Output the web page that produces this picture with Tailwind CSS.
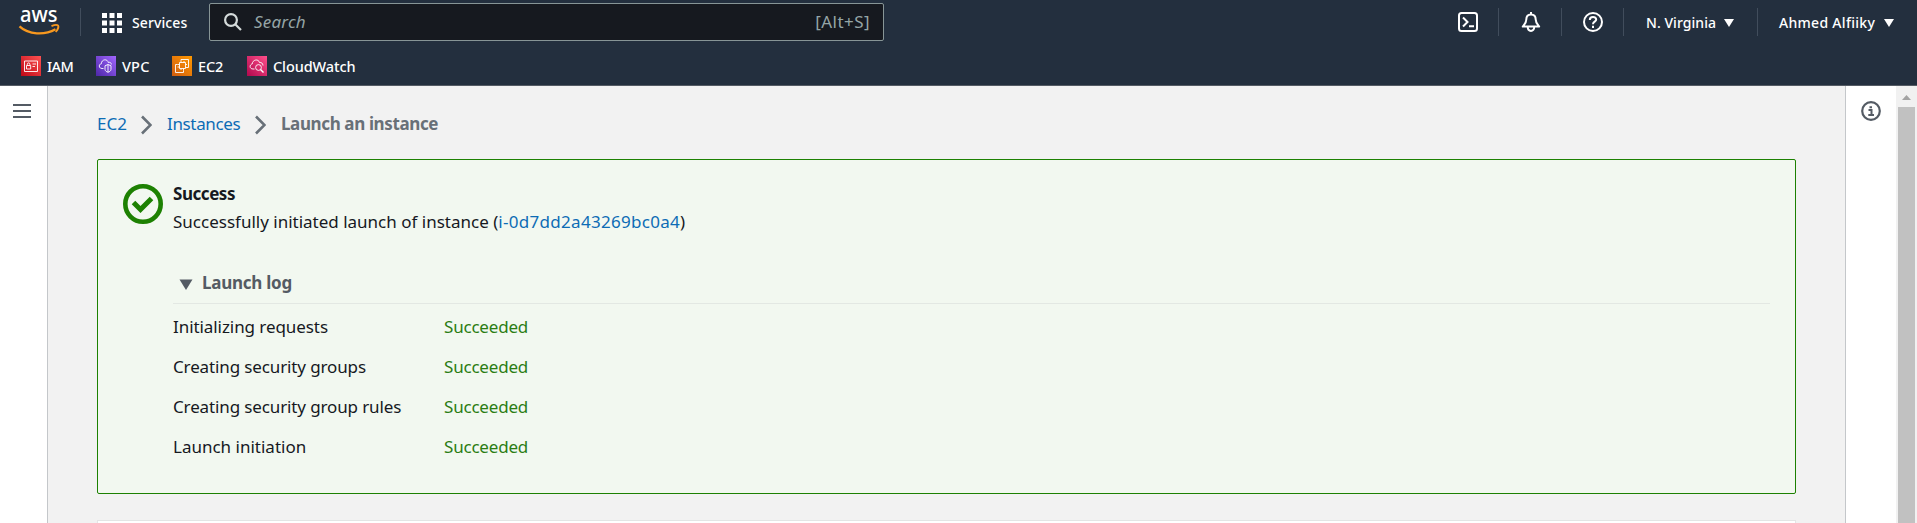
<!DOCTYPE html>
<html lang="en">
<head>
<meta charset="utf-8">
<title>Launch an instance</title>
<script src="https://cdn.jsdelivr.net/npm/@tailwindcss/browser@4"></script>
</head>
<body class="flex h-[523px] w-[1917px] flex-col overflow-hidden bg-[#f2f3f3] font-['Noto_Sans','Open_Sans',sans-serif] text-[17px] leading-7 whitespace-nowrap text-[#16191f]">
<header class="h-[86px] shrink-0 border-b border-[#545b64] bg-[#232f3e] text-sm font-medium text-white">
  <div class="flex h-[45px] items-start">
    <div class="w-20 pt-[6px] pl-[19px]">
      <svg class="block h-[30px] w-[41px] overflow-visible" viewBox="0 0 41 30">
        <text x="1" y="16" textLength="37.5" lengthAdjust="spacingAndGlyphs" font-family="Noto Sans" font-size="21" font-weight="500" fill="#fff">aws</text>
        <path d="M.5 20.4C9.5 28.8 25.500 29.500 36.500 23.200" fill="none" stroke="#f7981f" stroke-width="2.300"/>
        <path d="M32.500 20.200c3-1.300 6-1.300 6.700-.5.5 1-.4 4-2.500 6.300" fill="none" stroke="#f7981f" stroke-width="1.800"/>
      </svg>
    </div>
    <div class="mt-2 h-7 w-px bg-[#414d5c]"></div>
    <div class="flex w-32 items-center pt-3 pl-[21px]">
      <svg class="size-5" viewBox="0 0 20 20" fill="#fff"><path d="M0 0h5v5H0zM7.500 0h5v5h-5zM15 0h5v5h-5zM0 7.500h5v5H0zM7.500 7.500h5v5h-5zM15 7.500h5v5h-5zM0 15h5v5H0zM7.500 15h5v5h-5zM15 15h5v5h-5z"/></svg>
      <span class="ml-[10px] leading-[22px] tracking-[.1px]">Services</span>
    </div>
    <div class="mt-[3px] flex h-[38px] w-[675px] items-center rounded-xs border border-[#879596] bg-[#16191f] pr-[13px] pl-3.5 text-[17px] font-normal text-[#95a5a6]">
      <svg class="size-[18px]" viewBox="0 0 18 18" fill="none" stroke="#d5dbdb" stroke-width="2.200"><circle cx="7" cy="7" r="5.900"/><path d="m11 11 6 6"/></svg>
      <span class="ml-[12px] tracking-[.2px] italic">Search</span>
      <span class="ml-auto tracking-[.45px]">[Alt+S]</span>
    </div>
    <div class="ml-auto flex h-full items-start">
      <svg class="mt-3 mr-5 size-5" viewBox="0 0 20 20" fill="none" stroke="#fff" stroke-width="2"><rect x="1" y="1" width="18" height="18" rx="2.500"/><path d="m5 5.500 4.500 4.500L5 14.500M11 14.200h5"/></svg>
      <div class="mt-2 h-7 w-px bg-[#414d5c]"></div>
      <svg class="mr-[20px] ml-[22px] mt-3 h-5 w-[20px]" viewBox="0 0 20 20" fill="none" stroke="#fff" stroke-width="2"><path d="M10 0v2.500M10 2.500C6.500 2.500 5.300 5 5.300 7.500c0 3.500-2 5.200-3.500 7.100h16.400c-1.500-1.900-3.500-3.600-3.500-7.100 0-2.500-1.200-5-4.700-5ZM6.700 14.600c0 5.700 6.600 5.700 6.600 0" stroke-linejoin="round"/></svg>
      <div class="mt-2 h-7 w-px bg-[#414d5c]"></div>
      <svg class="mr-5 ml-[21px] mt-3 size-5" viewBox="0 0 20 20" fill="none" stroke="#fff" stroke-width="2"><circle cx="10" cy="10" r="9"/><path d="M6.800 8c0-4 6.400-4 6.400-.4C13.200 9.800 10 9.600 10 12.200M10 13.700v2.200"/></svg>
      <div class="mt-2 h-7 w-px bg-[#414d5c]"></div>
      <div class="flex w-[133px] items-center pt-3 pl-[22px] leading-[22px]"><span class="w-[78px] tracking-[.05px]">N. Virginia</span><svg class="h-2 w-[10px]" viewBox="0 0 10 8"><path d="M0 0h10L5 8z" fill="#fff"/></svg></div>
      <div class="mt-2 h-7 w-px bg-[#414d5c]"></div>
      <div class="flex w-[159px] items-center pt-3 pl-[21px] leading-[22px]"><span class="w-[105px] tracking-[.3px]">Ahmed Alfiiky</span><svg class="h-2 w-[10px]" viewBox="0 0 10 8"><path d="M0 0h10L5 8z" fill="#fff"/></svg></div>
    </div>
  </div>
  <nav class="flex h-[40px] items-center pt-[1px] pl-[21px] text-[14.500px] leading-5">
    <a class="flex w-[75px] items-center gap-[6px]">
      <svg class="size-5" viewBox="0 0 20 20" fill="none" stroke="#fff" stroke-width=".9"><defs><linearGradient id="r" x1="0" y1="1" x2="1" y2="0"><stop stop-color="#bd0816"/><stop offset="1" stop-color="#ff5252"/></linearGradient></defs><path fill="url(#r)" stroke="none" d="M0 0h20v20H0z"/><path d="M3.500 5h13v10.500h-13zM5.500 9.500h4.200V13H5.500zM6.300 9.500V8.200c0-1.700 2.600-1.700 2.600 0v1.300M11.500 8h3.500M11.500 10.500H14"/></svg>
      <span class="tracking-[-.6px]">IAM</span></a>
    <a class="flex w-[76px] items-center gap-[6px]">
      <svg class="size-5" viewBox="0 0 20 20" fill="none" stroke="#fff" stroke-width=".9"><defs><linearGradient id="v" x1="0" y1="1" x2="1" y2="0"><stop stop-color="#4d27a8"/><stop offset="1" stop-color="#a166ff"/></linearGradient></defs><path fill="url(#v)" stroke="none" d="M0 0h20v20H0z"/><path d="M7.500 12.500H6C2.500 12.500 2.500 8 5.300 7.800 5.500 3 11.500 2.500 12.300 6.500c2.200-.6 3 .6 3 2M9 9.800l3-1.300 3 1.300v3.500c0 1.500-1.500 2.500-3 3-1.500-.5-3-1.500-3-3zM12 8.500v7.500"/></svg>
      <span class="tracking-[.2px]">VPC</span></a>
    <a class="flex w-[75px] items-center gap-[6px]">
      <svg class="size-5" viewBox="0 0 20 20" fill="none" stroke="#fff" stroke-width=".9"><defs><linearGradient id="e" x1="0" y1="1" x2="1" y2="0"><stop stop-color="#d05c10"/><stop offset="1" stop-color="#ff9900"/></linearGradient></defs><path fill="url(#e)" stroke="none" d="M0 0h20v20H0z"/><path d="M7.500 6.500h6v6h-6zM9 4.500v-1h7.500v8h-1.700M5.500 8.500h-2v8h8v-2M9 6.500v-2M12 6.500V5M7.500 8.500h-2M7.500 11h-2M13.500 8.500H15M13.500 11.500h2M9 12.500V14M11.500 12.500v2"/></svg>
      <span class="tracking-[-.1px]">EC2</span></a>
    <a class="flex items-center gap-[6px]">
      <svg class="size-5" viewBox="0 0 20 20" fill="none" stroke="#fff" stroke-width=".9"><defs><linearGradient id="c" x1="0" y1="1" x2="1" y2="0"><stop stop-color="#b0084d"/><stop offset="1" stop-color="#ff4f8b"/></linearGradient></defs><path fill="url(#c)" stroke="none" d="M0 0h20v20H0z"/><path d="M7.500 13H6c-3.700 0-3.700-4.500-.8-5C5.500 3.500 11.500 2.500 12.500 6.500c2-.3 3.300.8 3.500 3"/><circle cx="11.500" cy="11.500" r="2.900"/><path d="m13.500 13.500 3 3" stroke-width="1.400"/></svg>
      <span class="tracking-[-.1px]">CloudWatch</span></a>
  </nav>
</header>
<div class="flex min-h-0 flex-1">
  <aside class="w-12 shrink-0 border-r border-[#c4c7ca] bg-white pt-[17px] pl-[13px]">
    <svg class="block h-4 w-[18px]" viewBox="0 0 18 16" fill="none" stroke="#545b64" stroke-width="2"><path d="M0 2h18M0 8h18M0 14h18"/></svg>
  </aside>
  <main class="flex min-w-0 flex-1 flex-col bg-[#f2f2f2] pr-[49px] pl-[49px]">
    <nav class="flex h-[73px] shrink-0 items-start pt-6 text-[#0d6cb5]">
      <a class="w-[44px]">EC2</a>
      <svg class="mt-[5px] mr-[15px] h-[20px] w-[11px]" viewBox="0 0 11 20" fill="none" stroke="#687078" stroke-width="2.600"><path d="m1 1.500 8.500 8.500L1 18.500"/></svg>
      <a class="w-[88px] tracking-[-.35px]">Instances</a>
      <svg class="mt-[5px] mr-[15px] h-[20px] w-[11px]" viewBox="0 0 11 20" fill="none" stroke="#687078" stroke-width="2.600"><path d="m1 1.500 8.500 8.500L1 18.500"/></svg>
      <span class="font-bold tracking-[-.38px] text-[#687078]">Launch an instance</span>
    </nav>
    <section class="flex h-[335px] shrink-0 rounded-xs border border-[#1d8102] bg-[#f2f8f0] pr-[25px] pl-[25px]">
      <svg class="mt-6 mr-[10px] size-10 shrink-0" viewBox="0 0 40 40" fill="none" stroke="#1d8102"><circle cx="20" cy="20" r="17.700" stroke-width="4.600"/><path d="m10.500 18.500 7 7 11-11" stroke-width="5"/></svg>
      <div class="flex-1 pt-5">
        <h2 class="font-bold tracking-[-.45px]">Success</h2>
        <p><span>Successfully initiated launch of instance (</span><a class="tracking-[.3px] text-[#0d6cb5]">i-0d7dd2a43269bc0a4</a>)</p>
        <div class="mt-[33px] flex h-[35px] items-start gap-[9px] border-b border-[#e3e8e3] pl-1.5 font-bold tracking-[-.25px] text-[#545b64]"><svg class="mt-[10px] h-[11px] w-[14px]" viewBox="0 0 14 11"><path d="M.5.500h13L7 11z" fill="#545b64"/></svg>Launch log</div>
        <dl class="mt-[3px] grid grid-cols-[271px_1fr] leading-10">
          <dt class="tracking-[-.07px]">Initializing requests</dt><dd class="tracking-[-.2px] text-[#2b7d13]">Succeeded</dd>
          <dt class="tracking-[-.13px]">Creating security groups</dt><dd class="tracking-[-.2px] text-[#2b7d13]">Succeeded</dd>
          <dt class="tracking-[-.13px]">Creating security group rules</dt><dd class="tracking-[-.2px] text-[#2b7d13]">Succeeded</dd>
          <dt>Launch initiation</dt><dd class="tracking-[-.2px] text-[#2b7d13]">Succeeded</dd>
        </dl>
      </div>
    </section>
    <section class="mt-[26px] h-10 shrink-0 border border-[#e3e5e5] bg-white"></section>
  </main>
  <aside class="w-[51px] shrink-0 border-l border-[#c4c7ca] bg-white pt-[15px] pl-[15px]">
    <svg class="block size-5" viewBox="0 0 20 20" fill="none" stroke="#545b64" stroke-width="2.200"><circle cx="10" cy="10" r="8.800"/><path d="M7.500 9h3v5M7.300 14h5.700M8.500 6.200h2.500" stroke-width="2"/></svg>
  </aside>
  <div class="w-[21px] shrink-0 bg-[#f1f1f1] px-[2px]">
    <svg class="h-[21px] w-[17px]" viewBox="0 0 17 21"><path d="M4 14h9L8.500 9z" fill="#a3a3a3"/></svg>
    <div class="h-full bg-[#c1c1c1]"></div>
  </div>
</div>
</body>
</html>
